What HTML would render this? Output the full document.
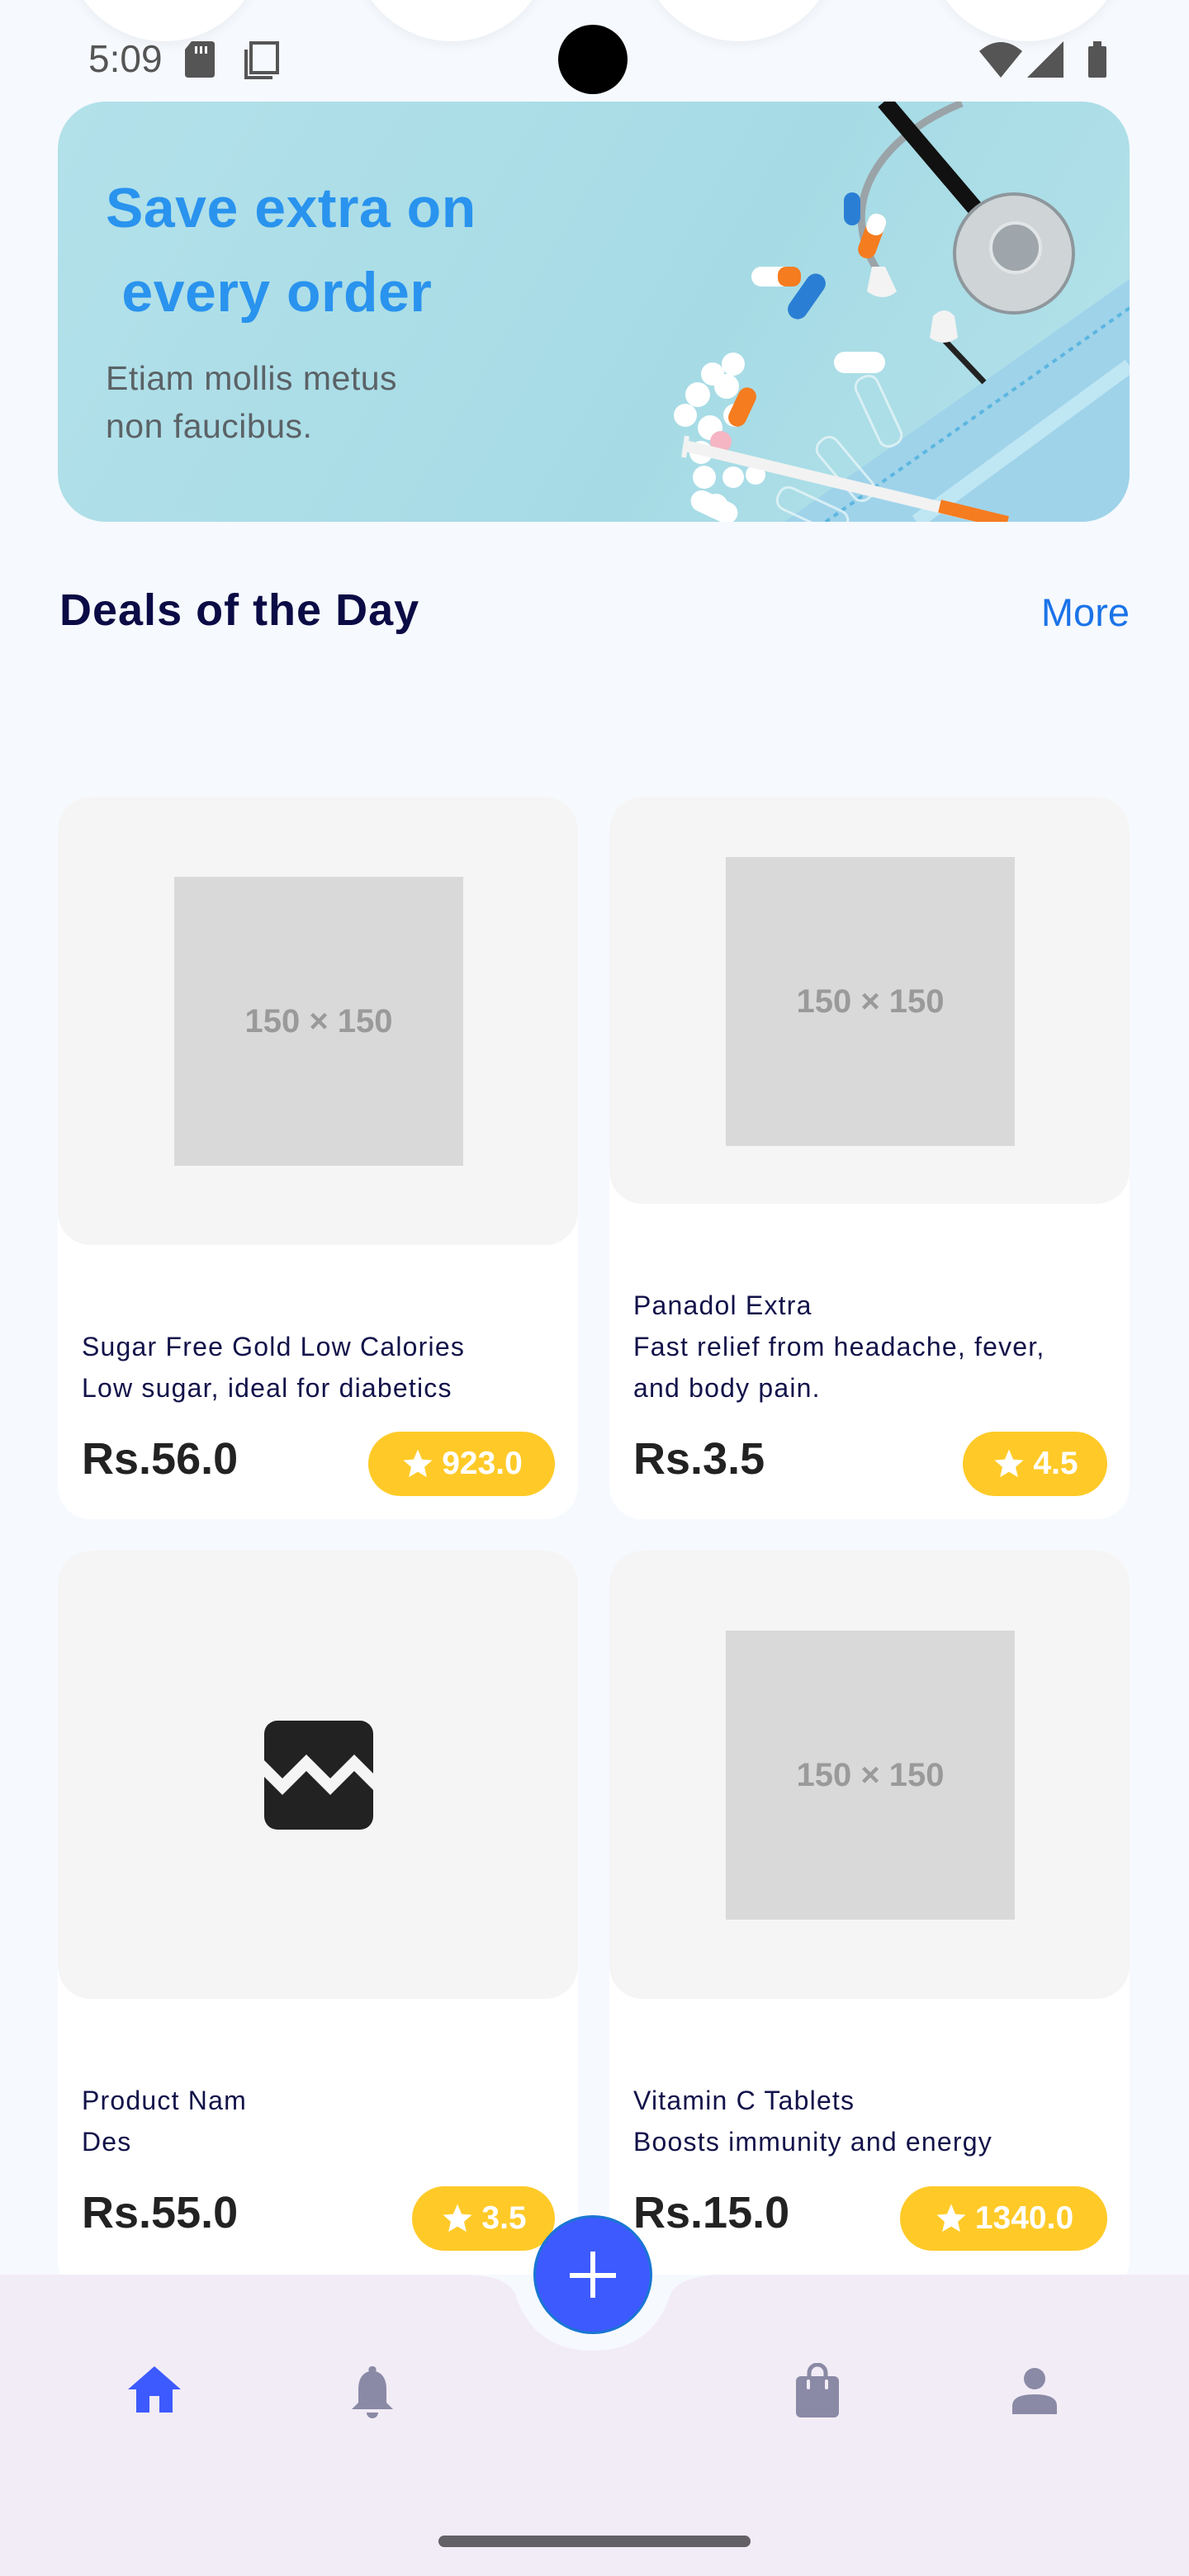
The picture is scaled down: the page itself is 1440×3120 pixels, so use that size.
<!DOCTYPE html>
<html><head><meta charset="utf-8">
<style>
*{margin:0;padding:0;box-sizing:border-box}
body{width:1440px;height:3120px;background:#f6f9fe;position:relative;overflow:hidden;font-family:"Liberation Sans",sans-serif}
.abs{position:absolute}
.circ{position:absolute;width:240px;height:240px;border-radius:50%;background:#fff;top:-190px;box-shadow:0 4px 14px rgba(0,0,0,0.05)}
.card{position:absolute;background:#fff;border-radius:40px;overflow:hidden}
.img{position:absolute;left:0;top:0;width:100%;background:#f5f5f5;border-radius:40px}
.ph{position:absolute;width:350px;height:350px;background:#d9d9d9;color:#9a9a9a;font-size:40px;font-weight:bold;display:flex;align-items:center;justify-content:center}
.t{position:absolute;left:29px;font-size:32px;color:#12124a;line-height:50px;letter-spacing:1.2px}
.price{position:absolute;left:29px;font-size:54px;font-weight:bold;color:#222}
.pill{position:absolute;height:78px;border-radius:39px;background:#ffca28;color:#fff;font-weight:bold;font-size:39px;display:flex;align-items:center;justify-content:center;gap:8px}
.pill svg{width:42px;height:42px}
</style></head><body>
<div class="circ" style="left:79px"></div>
<div class="circ" style="left:427px"></div>
<div class="circ" style="left:775px"></div>
<div class="circ" style="left:1123px"></div>

<div class="abs" style="left:107px;top:44px;font-size:46px;color:#555">5:09</div>
<svg class="abs" style="left:222px;top:50px" width="40" height="44" viewBox="0 0 40 44"><path d="M10 0H34Q38 0 38 4V40Q38 44 34 44H6Q2 44 2 40V10Z" fill="#555"/><rect x="14" y="6" width="3" height="9" fill="#f6f9fe"/><rect x="20" y="6" width="3" height="9" fill="#f6f9fe"/><rect x="26" y="6" width="3" height="9" fill="#f6f9fe"/></svg>
<svg class="abs" style="left:294px;top:50px" width="46" height="46" viewBox="0 0 46 46"><rect x="10" y="2" width="32" height="36" fill="none" stroke="#555" stroke-width="4"/><path d="M4 10V44H36" fill="none" stroke="#555" stroke-width="4"/></svg>
<div class="abs" style="left:676px;top:30px;width:84px;height:84px;border-radius:50%;background:#000"></div>
<svg class="abs" style="left:1186px;top:50px" width="160" height="46" viewBox="0 0 160 46"><path d="M0 12Q26 -10 52 12L26 44Z" fill="#555"/><path d="M102 0V44H58Z" fill="#555"/><rect x="132" y="6" width="22" height="38" rx="2" fill="#555"/><rect x="138" y="0" width="10" height="8" fill="#555"/></svg>

<!-- banner -->
<div class="abs" style="left:70px;top:123px;width:1298px;height:509px;border-radius:58px;overflow:hidden;background:linear-gradient(120deg,#b3e1ea,#a6dbe5 60%,#b4e2ea)">
<svg class="abs" style="left:0;top:0" width="1298" height="509" viewBox="0 0 1298 509">
<polygon points="1298,215 1298,509 880,509" fill="#9fd3ea"/>
<path d="M1298,250 L930,509" stroke="#5cb6e0" stroke-width="4" stroke-dasharray="6 6"/>
<path d="M1298,320 L1040,509" stroke="#bfe6f3" stroke-width="18"/>
<path d="M1095,2 C1000,40 940,120 993,205" fill="none" stroke="#9aa3a8" stroke-width="9"/>
<path d="M1001,0 L1137,160" stroke="#111" stroke-width="20"/>
<circle cx="1158" cy="184" r="72" fill="#cfd4d7" stroke="#8e979c" stroke-width="4"/>
<circle cx="1160" cy="177" r="30" fill="#9ea6ab" stroke="#e1e5e7" stroke-width="4"/>
<path d="M1002,200 l-16,0 l-6,30 q20,14 36,0 z" fill="#f3f3f3"/>
<path d="M1069,284 L1122,340" stroke="#222" stroke-width="7"/>
<path d="M1060,260 q14,-14 26,0 l4,26 q-18,12 -34,0 z" fill="#f3f3f3"/>
<rect x="840" y="200" width="60" height="24" rx="12" fill="#fff"/><rect x="872" y="200" width="28" height="24" rx="10" fill="#f57c1f"/>
<rect x="895" y="205" width="24" height="62" rx="12" fill="#2a7fd4" transform="rotate(35 907 236)"/>
<rect x="975" y="135" width="22" height="56" rx="11" fill="#f57c1f" transform="rotate(20 986 163)"/>
<rect x="975" y="135" width="22" height="26" rx="10" fill="#fff" transform="rotate(20 986 163)"/>
<rect x="952" y="110" width="20" height="40" rx="10" fill="#2a7fd4"/>
<rect x="940" y="303" width="62" height="26" rx="13" fill="#fff"/>
<g fill="#fff"><circle cx="793" cy="330" r="14"/><circle cx="818" cy="318" r="14"/><circle cx="775" cy="355" r="15"/><circle cx="810" cy="345" r="15"/><circle cx="760" cy="380" r="14"/><circle cx="790" cy="395" r="15"/><circle cx="820" cy="380" r="14"/><circle cx="779" cy="425" r="14"/><circle cx="783" cy="455" r="14"/><circle cx="818" cy="455" r="13"/><circle cx="845" cy="452" r="12"/><circle cx="797" cy="490" r="15"/><rect x="765" y="478" width="60" height="26" rx="13" transform="rotate(25 795 491)"/></g>
<circle cx="803" cy="412" r="13" fill="#f5b5c3"/>
<rect x="818" y="345" width="22" height="50" rx="11" fill="#f57c1f" transform="rotate(25 829 370)"/>
<g fill="none" stroke="#e6f5f8" stroke-width="3" opacity="0.8"><rect x="980" y="330" width="28" height="90" rx="12" transform="rotate(-25 994 375)"/><rect x="940" y="400" width="28" height="90" rx="12" transform="rotate(-40 954 445)"/><rect x="900" y="450" width="28" height="90" rx="12" transform="rotate(-65 914 495)"/></g>
<path d="M760,417 L1133,507" stroke="#f2f2f2" stroke-width="14"/>
<path d="M1068,490 L1150,510" stroke="#f57c1f" stroke-width="16"/>
<path d="M762,405 l-4,26" stroke="#f2f2f2" stroke-width="6"/>
</svg>
<div class="abs" style="left:58px;top:78px;font-size:68px;font-weight:bold;color:#2993ee;line-height:102px;letter-spacing:0.5px">Save extra on<br>&nbsp;every order</div>
<div class="abs" style="left:58px;top:306px;font-size:41px;color:#5b6266;line-height:58px;letter-spacing:0.5px">Etiam mollis metus<br>non faucibus.</div>
</div>

<div class="abs" style="left:72px;top:708px;font-size:54px;font-weight:bold;color:#0b0b45;letter-spacing:1px">Deals of the Day</div>
<div class="abs" style="right:72px;top:714px;font-size:47px;color:#1a73e8">More</div>

<!-- row 1 -->
<div class="card" style="left:70px;top:965px;width:630px;height:875px">
 <div class="img" style="height:543px"></div>
 <div class="ph" style="left:141px;top:97px">150 × 150</div>
 <div class="t" style="top:641px">Sugar Free Gold Low Calories<br>Low sugar, ideal for diabetics</div>
 <div class="price" style="top:771px">Rs.56.0</div>
 <div class="pill" style="left:376px;top:769px;width:226px"><svg viewBox="0 0 24 24"><path d="M12 2l2.9 6.9 7.1.6-5.4 4.7 1.6 7L12 17.5 5.8 21.2l1.6-7L2 9.5l7.1-.6z" fill="#fff"/></svg>923.0</div>
</div>
<div class="card" style="left:738px;top:965px;width:630px;height:875px">
 <div class="img" style="height:493px"></div>
 <div class="ph" style="left:141px;top:73px">150 × 150</div>
 <div class="t" style="top:591px">Panadol Extra<br>Fast relief from headache, fever,<br>and body pain.</div>
 <div class="price" style="top:771px">Rs.3.5</div>
 <div class="pill" style="left:428px;top:769px;width:175px"><svg viewBox="0 0 24 24"><path d="M12 2l2.9 6.9 7.1.6-5.4 4.7 1.6 7L12 17.5 5.8 21.2l1.6-7L2 9.5l7.1-.6z" fill="#fff"/></svg>4.5</div>
</div>

<!-- row 2 -->
<div class="card" style="left:70px;top:1878px;width:630px;height:900px">
 <div class="img" style="height:543px"></div>
 <svg class="abs" style="left:250px;top:206px" width="132" height="132" viewBox="0 0 132 132"><rect width="132" height="132" rx="16" fill="#222"/><path d="M0 48 L22 70 L51 41 L80 70 L109 41 L132 64 L132 84 L109 61 L80 90 L51 61 L22 90 L0 68Z" fill="#f5f5f5"/></svg>
 <div class="t" style="top:641px">Product Nam<br>Des</div>
 <div class="price" style="top:771px">Rs.55.0</div>
 <div class="pill" style="left:429px;top:770px;width:173px"><svg viewBox="0 0 24 24"><path d="M12 2l2.9 6.9 7.1.6-5.4 4.7 1.6 7L12 17.5 5.8 21.2l1.6-7L2 9.5l7.1-.6z" fill="#fff"/></svg>3.5</div>
</div>
<div class="card" style="left:738px;top:1878px;width:630px;height:900px">
 <div class="img" style="height:543px"></div>
 <div class="ph" style="left:141px;top:97px">150 × 150</div>
 <div class="t" style="top:641px">Vitamin C Tablets<br>Boosts immunity and energy</div>
 <div class="price" style="top:771px">Rs.15.0</div>
 <div class="pill" style="left:352px;top:770px;width:251px"><svg viewBox="0 0 24 24"><path d="M12 2l2.9 6.9 7.1.6-5.4 4.7 1.6 7L12 17.5 5.8 21.2l1.6-7L2 9.5l7.1-.6z" fill="#fff"/></svg>1340.0</div>
</div>

<!-- bottom nav -->
<div class="abs" style="left:0;top:2755px;width:1440px;height:365px;background:#f2ecf6"></div>
<svg class="abs" style="left:560px;top:2755px" width="320" height="100" viewBox="0 0 320 100"><path d="M0 0 Q60 0 66 30 Q90 92 158 92 Q226 92 250 30 Q256 0 320 0Z" fill="#f6f9fe"/></svg>
<div class="abs" style="left:646px;top:2683px;width:144px;height:144px;border-radius:50%;background:#3d5afe;border:3px solid #1976d2"></div>
<div class="abs" style="left:690px;top:2753px;width:56px;height:6px;background:#fff"></div>
<div class="abs" style="left:715px;top:2727px;width:6px;height:56px;background:#fff"></div>

<svg class="abs" style="left:155px;top:2866px" width="64" height="56" viewBox="0 0 64 56"><path d="M32 0 L64 28 L54 28 L54 56 L38 56 L38 36 L26 36 L26 56 L10 56 L10 28 L0 28Z" fill="#3d5afe"/></svg>
<svg class="abs" style="left:424px;top:2864px" width="54" height="66" viewBox="0 0 54 66"><path d="M27 2 a4 4 0 0 1 4 6 Q44 12 44 30 L44 46 L52 54 L2 54 L10 46 L10 30 Q10 12 23 8 a4 4 0 0 1 4 -6Z" fill="#8a8aa6"/><path d="M20 58 h14 a7 7 0 0 1 -14 0Z" fill="#8a8aa6"/></svg>
<svg class="abs" style="left:962px;top:2862px" width="56" height="68" viewBox="0 0 56 68"><path d="M18 16 V12 a10 10 0 0 1 20 0 V16" fill="none" stroke="#8a8aa6" stroke-width="5"/><rect x="2" y="16" width="52" height="50" rx="6" fill="#8a8aa6"/><rect x="15" y="20" width="4" height="12" rx="2" fill="#f2ecf6"/><rect x="37" y="20" width="4" height="12" rx="2" fill="#f2ecf6"/></svg>
<svg class="abs" style="left:1226px;top:2868px" width="54" height="56" viewBox="0 0 54 56"><circle cx="27" cy="13" r="13" fill="#8a8aa6"/><path d="M0 56 V46 Q0 32 27 32 Q54 32 54 46 V56Z" fill="#8a8aa6"/></svg>

<div class="abs" style="left:531px;top:3071px;width:378px;height:14px;border-radius:7px;background:#646166"></div>
</body></html>
